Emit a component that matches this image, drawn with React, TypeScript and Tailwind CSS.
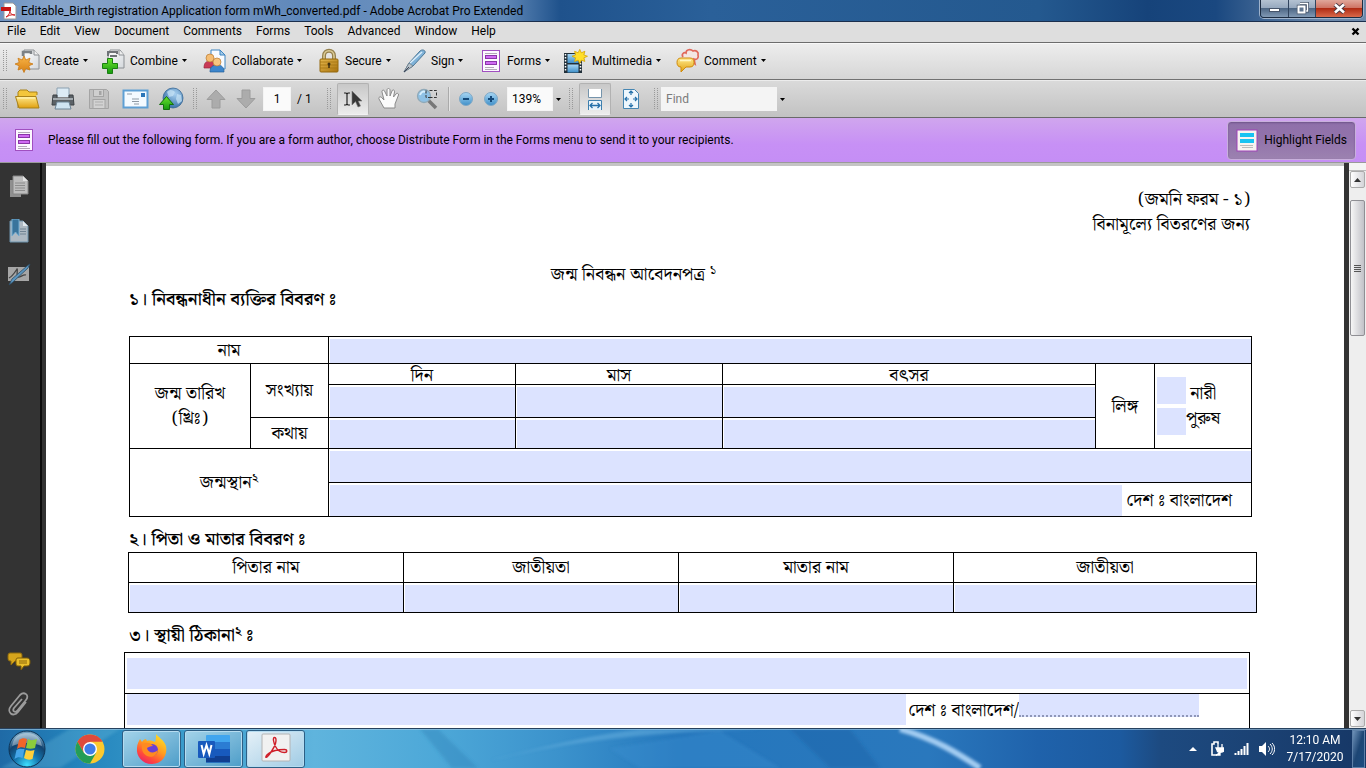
import type { InputHTMLAttributes, ReactNode } from 'react';
import clsx from 'clsx';

const menus = ['File', 'Edit', 'View', 'Document', 'Comments', 'Forms', 'Tools', 'Advanced', 'Window', 'Help'];

function Defs() {
  return (
    <svg width="0" height="0" className="absolute" aria-hidden="true">
      <defs>
        <linearGradient id="gold" x1="0" y1="0" x2="0" y2="1">
          <stop offset="0" stopColor="#ffe98a" />
          <stop offset="1" stopColor="#e0a010" />
        </linearGradient>
        <linearGradient id="brass" x1="0" y1="0" x2="1" y2="1">
          <stop offset="0" stopColor="#e6b84e" />
          <stop offset="1" stopColor="#a8730f" />
        </linearGradient>
        <linearGradient id="orange" x1="0" y1="0" x2="0" y2="1">
          <stop offset="0" stopColor="#f9b64a" />
          <stop offset="1" stopColor="#d77f12" />
        </linearGradient>
        <linearGradient id="green" x1="0" y1="0" x2="0" y2="1">
          <stop offset="0" stopColor="#6be32c" />
          <stop offset="1" stopColor="#169a10" />
        </linearGradient>
        <linearGradient id="paper" x1="0" y1="0" x2="1" y2="1">
          <stop offset="0" stopColor="#ffffff" />
          <stop offset="1" stopColor="#d4d8dc" />
        </linearGradient>
        <linearGradient id="sky" x1="0" y1="0" x2="0" y2="1">
          <stop offset="0" stopColor="#a9d8f5" />
          <stop offset="1" stopColor="#3f8fc8" />
        </linearGradient>
        <radialGradient id="globe" cx="0.6" cy="0.3" r="0.8">
          <stop offset="0" stopColor="#a8d0f0" />
          <stop offset="1" stopColor="#2a659f" />
        </radialGradient>
        <radialGradient id="orb" cx="0.5" cy="0.95" r="0.85">
          <stop offset="0" stopColor="#3fe0ff" />
          <stop offset="0.4" stopColor="#1577b0" />
          <stop offset="0.75" stopColor="#12436f" />
          <stop offset="1" stopColor="#6f9dbd" />
        </radialGradient>
        <linearGradient id="fox" x1="0.8" y1="0" x2="0.2" y2="1">
          <stop offset="0" stopColor="#ffe226" />
          <stop offset="0.45" stopColor="#ff9a1f" />
          <stop offset="0.75" stopColor="#ff4a3c" />
          <stop offset="1" stopColor="#e81e6c" />
        </linearGradient>
      </defs>
    </svg>
  );
}

function Icon({ w = 26, h = 26, children }: { w?: number; h?: number; children: ReactNode }) {
  return (
    <svg width={w} height={h} viewBox={`0 0 ${w} ${h}`} className="shrink-0" aria-hidden="true">
      {children}
    </svg>
  );
}

const star = 'M9 8l1.800 4 4.200-1.800-1.200 4.300 4.200 1.500-4.200 1.800 1.200 4.200-4.200-1.500-1.800 4-1.800-4-4.200 1.500 1.200-4.200L0 16l4.200-1.500L3 10.200 7.200 12z';

const CreateIcon = () => (
  <Icon>
    <path d="M9 2h10l5 5v14H9z" fill="url(#paper)" stroke="#8c9094" />
    <path d="M19 2v5h5" fill="#eee" stroke="#8c9094" />
    <path d="M8 8V4h8v2" fill="none" stroke="#7d8286" strokeWidth="2.500" />
    <path d={star} fill="url(#orange)" stroke="#c97a18" strokeWidth=".8" />
  </Icon>
);

const CombineIcon = () => (
  <Icon>
    <path d="M9 2h10l4 5v13H7V9z" fill="url(#paper)" stroke="#8c9094" />
    <path d="M18 2v5h5" fill="#eee" stroke="#8c9094" />
    <path d="M7 8V4h9v2M9 8h7" fill="none" stroke="#6f7377" strokeWidth="2" />
    <path d="M6.500 10.500h5v5h5v5h-5v5h-5v-5h-5v-5h5z" fill="url(#green)" stroke="#1a7f12" />
  </Icon>
);

const CollaborateIcon = () => (
  <Icon>
    <path d="M8 2h9l5 5v14H8z" fill="#f8fbff" stroke="#3c84c0" />
    <path d="M17 2v5h5z" fill="#a7cdea" stroke="#3c84c0" />
    <path d="M1 20c0-5 2-7 6-7s6 2 6 7z" fill="#c93a55" stroke="#96263e" strokeWidth=".7" />
    <circle cx="7" cy="10" r="4" fill="#f5bd73" stroke="#b97a32" strokeWidth=".7" />
    <path d="M7 24c0-5 2.500-7 7-7s7 2 7 7z" fill="#3d86cc" stroke="#245f99" strokeWidth=".7" />
    <circle cx="14" cy="14" r="4" fill="#f7c57f" stroke="#b97a32" strokeWidth=".7" />
  </Icon>
);

const SecureIcon = () => (
  <Icon w={22}>
    <path d="M6 12V8c0-7 10-7 10 0v4" fill="none" stroke="#94804e" strokeWidth="4" />
    <path d="M6 12V8c0-7 10-7 10 0v4" fill="none" stroke="#dccb96" strokeWidth="1.500" />
    <rect x="2" y="11" width="18" height="13" rx="1" fill="url(#brass)" stroke="#94680f" />
    <path d="M2 14h18M2 17h18M2 20h18" stroke="#a5750f" strokeWidth=".8" />
    <circle cx="11" cy="16" r="1.500" fill="#403010" />
    <path d="M11 16v4" stroke="#403010" strokeWidth="1.500" />
  </Icon>
);

const SignIcon = () => (
  <Icon>
    <path d="M2 24l5-9L18 3c2-2 6-1 5 2L11 18z" fill="#7fb2d8" stroke="#4c7796" />
    <path d="M8 15L20 4" stroke="#dceefa" strokeWidth="1.500" />
    <path d="M2 24l5-9 4 3z" fill="#b9c3ca" stroke="#6a7780" strokeWidth=".7" />
    <path d="M2 24l5-5" stroke="#445" />
  </Icon>
);

const FormsIcon = () => (
  <Icon w={20} h={24}>
    <rect x="1.500" y="1.500" width="17" height="21" fill="#fcf8ff" stroke="#a04fc0" />
    <path d="M4 4.500h12M4 12.500h12M4 18.500h9M4 20.500h12" stroke="#b3a8b8" />
    <rect x="4.500" y="6.500" width="11" height="3" fill="#cf6af2" stroke="#8a35a8" />
    <rect x="4.500" y="12.500" width="11" height="3" fill="#cf6af2" stroke="#8a35a8" />
  </Icon>
);

const MultimediaIcon = () => (
  <Icon>
    <rect x="1" y="5" width="18" height="20" fill="#22303a" />
    <path d="M2.500 6v18M17.500 6v18" stroke="#fff" strokeWidth="1.500" strokeDasharray="1.500 1.500" />
    <rect x="4.500" y="6" width="11" height="9" fill="url(#sky)" />
    <rect x="4.500" y="16.500" width="11" height="8" fill="url(#sky)" />
    <path d={star} transform="translate(9 -5.500) scale(.86)" fill="#ffdf2a" stroke="#d9a808" />
  </Icon>
);

const CommentIcon = () => (
  <Icon>
    <path d="M8 9C6 6 9 4 11 5c0-4 5-4 7-2 3-1 6 1 5 4 1 3-1 5-4 4l1 5-5-4" fill="#f3e6e3" stroke="#e0685a" strokeWidth="1.700" />
    <path d="M6 10h9c3 0 4 2 4 4.500S18 19 15 19h-4l-5 5v-5c-3 0-4-2-4-4.500S3 10 6 10z" fill="url(#gold)" stroke="#d08a0a" />
    <path d="M5 12.500h11" stroke="#fff7c4" strokeWidth="1.500" />
  </Icon>
);

const FolderIcon = () => (
  <Icon w={27} h={22}>
    <path d="M4 20V4l2-2h7l2 2h8v3" fill="#f3c63b" stroke="#a9821a" />
    <path d="M5 20L1.500 8.500H22L25 20z" fill="url(#gold)" stroke="#a9821a" />
    <path d="M3 10h18" stroke="#fff6c0" />
  </Icon>
);

const PrintIcon = () => (
  <Icon w={24} h={24}>
    <path d="M6 10V1h12v9" fill="#dcebf5" stroke="#8ba0b0" />
    <path d="M2 8h4v3h12V8h4l1 10H1z" fill="#5c6267" stroke="#3c4145" />
    <path d="M2 12h20" stroke="#a4abb0" strokeWidth="2" />
    <path d="M6 15h12l2 7H4z" fill="#cfe4f2" stroke="#6d8496" />
  </Icon>
);

const SaveIcon = () => (
  <Icon w={22} h={22}>
    <path d="M1.500 1.500h17l2 2v17h-19z" fill="#c0c0c0" stroke="#a4a4a4" />
    <rect x="5.500" y="1.500" width="10" height="7" fill="#cfcfcf" stroke="#a4a4a4" />
    <rect x="11" y="3" width="2.500" height="4" fill="#a4a4a4" />
    <rect x="5" y="11.500" width="12" height="9" fill="#d2d2d2" stroke="#a4a4a4" />
    <path d="M7 14h8M7 17h8" stroke="#adadad" />
  </Icon>
);

const MailIcon = () => (
  <Icon w={27} h={20}>
    <rect x="1.500" y="1.500" width="24" height="17" fill="#f4faff" stroke="#5e9fd4" strokeWidth="2" />
    <rect x="19" y="4" width="4" height="4" fill="#2c76b8" />
    <path d="M5 5h5M10 10h7M10 12.500h7M12 15h5" stroke="#8f9aa5" />
  </Icon>
);

const UploadIcon = () => (
  <Icon w={26} h={24}>
    <circle cx="15" cy="11" r="10" fill="url(#globe)" stroke="#285c8c" strokeWidth=".7" />
    <path d="M9 5c3-3 6-2 8 0l-2 4-4 1zM19 7l4 1 1 6-4 3-2-5z" fill="#cbe5f7" opacity=".7" />
    <path d="M8.500 9.500l7 8h-4v5h-6v-5h-4z" fill="url(#green)" stroke="#146f0e" />
  </Icon>
);

const PageArrowIcon = ({ down }: { down?: boolean }) => (
  <Icon w={20} h={20}>
    <path
      d="M10 1l9 9.500h-5V19H6v-8.500H1z"
      transform={down ? 'rotate(180 10 10)' : undefined}
      fill="#acacac"
      stroke="#9c9c9c"
    />
  </Icon>
);

const SelectIcon = () => (
  <Icon w={20} h={18}>
    <path d="M1 3h2l1 1 1-1h2M4 4v10M1 15h2l1-1 1 1h2" fill="none" stroke="#222" strokeWidth="1.200" />
    <path d="M9 1v14l3.500-3.500L15 17l2.500-1-2.300-5H19z" fill="#383838" stroke="#777" strokeWidth=".6" />
  </Icon>
);

const HandIcon = () => (
  <Icon w={22} h={22}>
    <path
      d="M6 20L1 11c-1-2 2-3 3-1l2 2L4 4c-.5-2 2-2.500 2.500-1L9 8V2c0-2 3-2 3 0v6l2-5c.6-2 3-1 2.500 1L15.500 9l2.500-3c1-1.500 3-.5 2.500 1L17 16v4z"
      fill="#fbfbfb"
      stroke="#8a8a8a"
    />
  </Icon>
);

const MarqueeZoomIcon = () => (
  <Icon w={22} h={22}>
    <path d="M12 12l8 8" stroke="#777" strokeWidth="3.500" />
    <path d="M9 2.500h11.500v7H14" fill="none" stroke="#333" strokeDasharray="3 1.500" />
    <circle cx="8" cy="8" r="6.500" fill="#8ec1e6" stroke="#8fa9b8" strokeWidth="1.300" />
    <path d="M10 2.500v7h6" fill="none" stroke="#333" strokeDasharray="3 1.500" />
    <path d="M4 7c1-3 3-4 5-3" fill="none" stroke="#d8effd" strokeWidth="2" />
  </Icon>
);

const RoundIcon = ({ plus }: { plus?: boolean }) => (
  <Icon w={16} h={16}>
    <circle cx="8" cy="8" r="6.500" fill="url(#sky)" stroke="#7fa8c6" />
    <path d={plus ? 'M5 8h6M8 5v6' : 'M5 8h6'} stroke="#154a7a" strokeWidth="2" />
  </Icon>
);

const FitWidthIcon = () => (
  <Icon w={18} h={22}>
    <path d="M2.500 1v8.500h13V1" fill="#fff" stroke="#7594ac" />
    <path d="M2.500 22v-9.500h13V22" fill="#e8f3fb" stroke="#3d7fae" />
    <path d="M4 17.500h10M6.500 15L4 17.500 6.500 20M11.500 15l2.500 2.500-2.500 2.500" fill="none" stroke="#2470aa" strokeWidth="1.300" />
  </Icon>
);

const FitPageIcon = () => (
  <Icon w={18} h={22}>
    <path d="M1.500 1.500h11l4 4v15h-15z" fill="#eef7fd" stroke="#4686b2" />
    <path
      d="M9 3v4M7 5l2-2 2 2M9 19v-4M7 17l2 2 2-2M3 11h4M5 9l-2 2 2 2M15 11h-4M13 9l2 2-2 2"
      fill="none"
      stroke="#2470aa"
      strokeWidth="1.200"
    />
  </Icon>
);

const toolbarItems = [
  { label: 'Create', icon: <CreateIcon />, width: 'w-[86px]' },
  { label: 'Combine', icon: <CombineIcon />, width: 'w-[102px]' },
  { label: 'Collaborate', icon: <CollaborateIcon />, width: 'w-[113px]' },
  { label: 'Secure', icon: <SecureIcon />, width: 'w-[86px]' },
  { label: 'Sign', icon: <SignIcon />, width: 'w-[76px]' },
  { label: 'Forms', icon: <FormsIcon />, width: 'w-[85px]' },
  { label: 'Multimedia', icon: <MultimediaIcon />, width: 'w-[112px]' },
  { label: 'Comment', icon: <CommentIcon />, width: 'w-[100px]' },
];

function Caret() {
  return (
    <svg width="5" height="3" viewBox="0 0 5 3" className="shrink-0" aria-hidden="true">
      <path d="M0 0h5L2.500 3z" fill="#000" />
    </svg>
  );
}

function Grip({ className }: { className?: string }) {
  return (
    <svg width="4" height="22" viewBox="0 0 4 22" className={clsx('shrink-0', className)} aria-hidden="true">
      <path d="M.5 0v22M3.500 0v22" stroke="#999" strokeDasharray="1 1" />
    </svg>
  );
}

function ToolButton({ label, className, children }: { label: string; className: string; children: ReactNode }) {
  return (
    <button aria-label={label} className={clsx('flex h-8 shrink-0 items-center justify-center', className)}>
      {children}
    </button>
  );
}

function TitleBar() {
  return (
    <header className="relative flex h-[22px] shrink-0 items-start justify-between border-b border-[#1b2f4d] bg-[linear-gradient(90deg,#6f93c2_0,#86a4ca_4%,#7896c2_14%,#5f88ba_22%,#6a90be_30%,#5f87b6_37%,#1f528c_41%,#2a6099_52%,#24598f_76%,#16437a_84%,#1a4880_89%,#6c89ab_97%)]">
      <div className="flex h-[21px] items-center gap-1 pl-px">
        <Icon w={16} h={18}>
          <path d="M3 1h9l3 3v13H3z" fill="#fff" stroke="#999" />
          <path d="M0 5h10v4H0z" fill="#c81414" />
          <path d="M5 15c3-1 4-5 4-7 0 4 2 5 5 5-4-1-7 1-9 2z" fill="none" stroke="#d02020" />
        </Icon>
        <h1 className="leading-4">
          Editable_Birth registration Application form mWh_converted.pdf - Adobe Acrobat Pro Extended
        </h1>
      </div>
      <div className="mr-[3px] flex h-[18px] overflow-hidden rounded-b-[4px] border border-t-0 border-[#1c2c42] shadow-[0_0_0_1px_#9fb3cc]">
        <button aria-label="Minimize" className="flex w-[28px] items-end justify-center border-r border-[#31445e] bg-[linear-gradient(#b4c2d2_0,#97a9bf_45%,#4e6785_50%,#8199b4_100%)] pb-[5px]">
          <span className="h-1 w-[11px] border border-[#46546a] bg-white" />
        </button>
        <button aria-label="Restore" className="flex w-[27px] items-center justify-center border-r border-[#31445e] bg-[linear-gradient(#b4c2d2_0,#97a9bf_45%,#4e6785_50%,#8199b4_100%)]">
          <Icon w={13} h={13}>
            <path d="M4 1.500h7.500V9H10" fill="none" stroke="#46546a" strokeWidth="3" />
            <path d="M4 1.500h7.500V9H10" fill="none" stroke="#fff" strokeWidth="1.400" />
            <path d="M2.500 4.500h6v6h-6z" fill="#60758f" stroke="#46546a" strokeWidth="3.400" />
            <path d="M2.500 4.500h6v6h-6z" fill="#60758f" stroke="#fff" strokeWidth="2" />
          </Icon>
        </button>
        <button aria-label="Close" className="flex w-[46px] items-center justify-center bg-[linear-gradient(#e0a79a_0,#cf7565_45%,#b02c14_50%,#d9694a_100%)]">
          <Icon w={13} h={11}>
            <path d="M2 1.500l9 8M11 1.500l-9 8" stroke="#4a3a44" strokeWidth="4.500" />
            <path d="M2 1.500l9 8M11 1.500l-9 8" stroke="#fff" strokeWidth="2.600" />
          </Icon>
        </button>
      </div>
    </header>
  );
}

function MenuBar() {
  return (
    <nav className="flex h-[21px] shrink-0 items-center justify-between border-b border-[#6c6c6c] bg-[#dedede] pr-[6px] pb-[2px] pl-[7px]">
      <div className="flex gap-[14px]">
        {menus.map((menu) => (
          <button key={menu} className="leading-4">
            {menu}
          </button>
        ))}
      </div>
      <button aria-label="Close document">
        <Icon w={9} h={9}>
          <path d="M1.500 1.500l6 6M7.500 1.500l-6 6" stroke="#000" strokeWidth="2.400" />
        </Icon>
      </button>
    </nav>
  );
}

function TaskToolbar() {
  return (
    <div className="flex h-[37px] shrink-0 items-center border-t border-b border-t-[#f8f8f8] border-b-[#727272] bg-linear-to-b from-[#ededed] to-[#d6d6d6] pb-[2px] pl-[3px]">
      <Grip className="mr-2" />
      {toolbarItems.map((item) => (
        <button key={item.label} className={clsx('flex h-8 shrink-0 items-center gap-1', item.width)}>
          <span className="flex w-[25px] justify-center">{item.icon}</span>
          {item.label}
          <Caret />
        </button>
      ))}
    </div>
  );
}

function FileToolbar() {
  return (
    <div className="flex h-[38px] shrink-0 items-center border-t border-b border-t-[#ececec] border-b-[#6a6a6a] bg-linear-to-b from-[#dadada] to-[#c2c2c2] pl-[3px]">
      <Grip className="mr-[2px]" />
      <ToolButton label="Open" className="w-9"><FolderIcon /></ToolButton>
      <ToolButton label="Print" className="w-9"><PrintIcon /></ToolButton>
      <ToolButton label="Save" className="w-9"><SaveIcon /></ToolButton>
      <ToolButton label="Email" className="w-9"><MailIcon /></ToolButton>
      <ToolButton label="Upload" className="w-9"><UploadIcon /></ToolButton>
      <Grip className="mx-1" />
      <ToolButton label="Previous page" className="w-[30px]"><PageArrowIcon /></ToolButton>
      <ToolButton label="Next page" className="w-[30px]"><PageArrowIcon down /></ToolButton>
      <input
        aria-label="Page number"
        defaultValue="1"
        className="ml-[2px] h-6 w-7 border border-[#f4f4f4] bg-[#fafafa] text-center outline-none"
      />
      <span className="w-9 shrink-0 pl-[6px] whitespace-pre">/ 1</span>
      <Grip className="mr-[6px]" />
      <ToolButton label="Select tool" className="w-8 rounded-[2px] border border-[#b2b2b2] border-b-[#f2f2f2] bg-linear-to-b from-[#c8c8c8] to-[#ececec]">
        <SelectIcon />
      </ToolButton>
      <ToolButton label="Hand tool" className="w-10"><HandIcon /></ToolButton>
      <ToolButton label="Marquee zoom" className="w-9"><MarqueeZoomIcon /></ToolButton>
      <span className="mx-[3px] h-6 w-[2px] border-l border-[#aaa] bg-[#e4e4e4]" />
      <ToolButton label="Zoom out" className="w-[26px]"><RoundIcon /></ToolButton>
      <ToolButton label="Zoom in" className="w-6"><RoundIcon plus /></ToolButton>
      <input
        aria-label="Zoom"
        defaultValue="139%"
        className="ml-1 h-6 w-[46px] border border-[#f4f4f4] bg-[#fafafa] pl-1 outline-none"
      />
      <ToolButton label="Zoom presets" className="w-[10px]"><Caret /></ToolButton>
      <Grip className="mx-[6px]" />
      <ToolButton label="Scrolling pages" className="w-8 rounded-[2px] border border-[#b2b2b2] border-b-[#f2f2f2] bg-linear-to-b from-[#c8c8c8] to-[#ececec]">
        <FitWidthIcon />
      </ToolButton>
      <ToolButton label="One full page" className="w-10"><FitPageIcon /></ToolButton>
      <Grip className="mx-[3px]" />
      <input
        aria-label="Find"
        placeholder="Find"
        className="h-6 w-[116px] border border-[#f4f4f4] bg-[#f4f4f4] pl-1 outline-none placeholder:text-[#7b7b7b]"
      />
      <ToolButton label="Find options" className="w-[10px]"><Caret /></ToolButton>
    </div>
  );
}

function MessageBar() {
  return (
    <div className="flex h-[44px] shrink-0 items-center justify-between bg-[linear-gradient(#d0a6ee_0,#c790f5_60%,#c58ef5_100%)] pr-[10px] pl-[14px]">
      <div className="flex items-center gap-[14px]">
        <FormsIcon />
        <p>
          Please fill out the following form. If you are a form author, choose Distribute Form in the Forms menu to send it to your recipients.
        </p>
      </div>
      <button className="flex h-[39px] items-center gap-[6px] rounded-[4px] border border-[#c8b0dc] bg-[linear-gradient(#8f70aa,#9273ab_50%,#9c82b0)] px-2 shadow-[inset_0_1px_2px_#6f5488]">
        <Icon w={22} h={23}>
          <rect x="1" y="1" width="20" height="21" fill="#f6f3f0" stroke="#a042b8" />
          <rect x="4" y="4" width="14" height="4" fill="#18c3f2" />
          <rect x="4" y="10" width="14" height="4" fill="#18c3f2" />
          <path d="M4 16.500h13M6 18.500h11" stroke="#bbb" />
        </Icon>
        Highlight Fields
      </button>
    </div>
  );
}

function SidePanel() {
  return (
    <aside className="flex w-[42px] shrink-0 flex-col justify-between border-r-2 border-[#0c0c0c] bg-[#333] pt-3 pr-[2px] pb-[10px]">
      <div className="flex flex-col items-center gap-5">
        <button aria-label="Pages">
          <Icon w={20} h={24}>
            <path d="M1 5h11v17H1z" fill="#8f8f8f" />
            <path d="M4 1h10l5 5v13H4z" fill="#bdbdbd" stroke="#858585" />
            <path d="M14 1v5h5z" fill="#e2e2e2" />
            <path d="M6 8h10M6 10.500h10M6 13h10M6 15.500h10" stroke="#8c8c8c" />
          </Icon>
        </button>
        <button aria-label="Bookmarks">
          <Icon w={20} h={24}>
            <path d="M1 2h13l5 5v16H1z" fill="#aeb9c2" stroke="#6d93ad" />
            <path d="M14 2v5h5z" fill="#e2e8ec" />
            <path d="M11 10h6M11 12.500h6M11 15h6" stroke="#718493" />
            <path d="M3 0h7v17l-3.500-4L3 17z" fill="#39749c" stroke="#75acd0" />
          </Icon>
        </button>
        <button aria-label="Signatures">
          <Icon w={26} h={24}>
            <path d="M2 4h21v14H2z" fill="#a6a6a6" />
            <path d="M3 15c4-2 6-6 8-9 1 0-1 7 1 8s5-3 8-2" fill="none" stroke="#444" strokeWidth="1.300" />
            <path d="M3 22l3-6L21 3l3-2-2 4L7 19z" fill="#5b95bf" stroke="#2c4d66" strokeWidth=".8" />
          </Icon>
        </button>
      </div>
      <div className="flex flex-col items-center gap-5">
        <button aria-label="Comments">
          <Icon w={24} h={20}>
            <path d="M3 1h10c2 0 2 1 2 4s0 4-2 4H8l-4 4V9H3C1 9 1 7 1 5s0-4 2-4z" fill="#d6a51c" stroke="#8e6a0c" />
            <path d="M11 6h9c2 0 3 1 3 4s-1 4-3 4h-3l-3 4v-4h-3c-2 0-2-1-2-4s0-4 2-4z" fill="#eabf2c" stroke="#7d5c08" />
            <path d="M12 9h8M12 11h8" stroke="#8a6508" />
          </Icon>
        </button>
        <button aria-label="Attachments">
          <Icon w={22} h={26}>
            <path
              d="M14 7L6 16c-2 3 1 5 3 3l9-11c4-5-2-9-6-5L3 14c-5 6 2 12 7 6l8-10"
              fill="none"
              stroke="#9b9b9b"
              strokeWidth="1.800"
            />
          </Icon>
        </button>
      </div>
    </aside>
  );
}

function Field({ className, ...props }: InputHTMLAttributes<HTMLInputElement>) {
  return <input {...props} className={clsx('block bg-[#dce3ff] px-1 outline-none', className)} />;
}

const cell = 'border border-black p-0 text-center font-normal';
const headCell = 'border border-black p-0 pt-1 text-center font-normal leading-4';
const fieldCell = 'border border-black p-0 pt-[2px] pl-px';

// the visarga needs a no-break space as its base, else a dotted circle is drawn
function BirthForm() {
  return (
    <main className="min-w-0 flex-1 overflow-hidden border-t-3 border-[#c4c4c4] bg-white pt-[21px] pr-[92px] pl-[83px] font-['Noto_Serif_Bengali','Noto_Sans_Bengali','Liberation_Serif',serif] text-[18px] leading-[25px]">
      <div className="pr-[2px] text-right">
        <p>(জমনি ফরম - ১)</p>
        <p>বিনামূল্যে বিতরণের জন্য</p>
      </div>
      <h2 className="mt-[25px] pr-[114px] text-center">
        জন্ম নিবন্ধন আবেদনপত্র <sup className="text-[13px] leading-none">১</sup>
      </h2>
      <h3 className="mb-6 font-semibold">১। নিবন্ধনাধীন ব্যক্তির বিবরণ&nbsp;ঃ</h3>

      <table className="w-full table-fixed border-collapse">
        <colgroup>
          <col className="w-[121px]" />
          <col className="w-[78px]" />
          <col className="w-[187px]" />
          <col className="w-[207px]" />
          <col />
          <col className="w-[59px]" />
          <col className="w-[97px]" />
        </colgroup>
        <tbody>
          <tr className="h-[27px]">
            <th colSpan={2} className={cell}>নাম</th>
            <td colSpan={5} className={fieldCell}><Field aria-label="নাম" className="h-6 w-full" /></td>
          </tr>
          <tr className="h-[21px]">
            <th rowSpan={3} className={cell}>
              জন্ম তারিখ
              <br />
              (খ্রিঃ)
            </th>
            <th rowSpan={2} className={cell}>সংখ্যায়</th>
            <th className={headCell}>দিন</th>
            <th className={headCell}>মাস</th>
            <th className={headCell}>বৎসর</th>
            <th rowSpan={3} className={cell}>লিঙ্গ</th>
            <td rowSpan={3} className="border border-black p-0 pl-[2px]">
              <div className="flex items-center">
                <div className="flex flex-col gap-1">
                  <Field id="female" className="h-[27px] w-[29px]" />
                  <Field id="male" className="h-[27px] w-[29px]" />
                </div>
                <div className="flex flex-col items-center">
                  <label htmlFor="female">নারী</label>
                  <label htmlFor="male">পুরুষ</label>
                </div>
              </div>
            </td>
          </tr>
          <tr className="h-[33px]">
            <td className={fieldCell}><Field aria-label="দিন (সংখ্যায়)" className="h-[30px] w-full" /></td>
            <td className={fieldCell}><Field aria-label="মাস (সংখ্যায়)" className="h-[30px] w-full" /></td>
            <td className={fieldCell}><Field aria-label="বৎসর (সংখ্যায়)" className="h-[30px] w-full" /></td>
          </tr>
          <tr className="h-[31px]">
            <th className={cell}>কথায়</th>
            <td className={fieldCell}><Field aria-label="দিন (কথায়)" className="h-7 w-full" /></td>
            <td className={fieldCell}><Field aria-label="মাস (কথায়)" className="h-7 w-full" /></td>
            <td className={fieldCell}><Field aria-label="বৎসর (কথায়)" className="h-7 w-full" /></td>
          </tr>
          <tr className="h-[34px]">
            <th rowSpan={2} colSpan={2} className={cell}>
              জন্মস্থান<sup className="text-[13px] leading-none">২</sup>
            </th>
            <td colSpan={5} className={fieldCell}><Field aria-label="জন্মস্থান" className="h-[31px] w-full" /></td>
          </tr>
          <tr className="h-[34px]">
            <td colSpan={5} className={fieldCell}>
              <div className="flex items-center pr-[19px]">
                <Field aria-label="জন্মস্থান, দ্বিতীয় লাইন" className="mr-1 h-[31px] min-w-0 flex-1" />
                <span>দেশ&nbsp;ঃ বাংলাদেশ</span>
              </div>
            </td>
          </tr>
        </tbody>
      </table>

      <h3 className="mt-[10px] font-semibold">২। পিতা ও মাতার বিবরণ&nbsp;ঃ</h3>
      <div className="-mr-[5px] -ml-px">
        <table className="w-full table-fixed border-collapse">
          <colgroup>
            <col className="w-[275px]" />
            <col className="w-[275px]" />
            <col className="w-[275px]" />
            <col />
          </colgroup>
          <thead>
            <tr className="h-[30px]">
              <th className={cell}>পিতার নাম</th>
              <th className={cell}>জাতীয়তা</th>
              <th className={cell}>মাতার নাম</th>
              <th className={cell}>জাতীয়তা</th>
            </tr>
          </thead>
          <tbody>
            <tr className="h-[30px]">
              <td className={fieldCell}><Field aria-label="পিতার নাম" className="h-[27px] w-full" /></td>
              <td className={fieldCell}><Field aria-label="পিতার জাতীয়তা" className="h-[27px] w-full" /></td>
              <td className={fieldCell}><Field aria-label="মাতার নাম" className="h-[27px] w-full" /></td>
              <td className={fieldCell}><Field aria-label="মাতার জাতীয়তা" className="h-[27px] w-full" /></td>
            </tr>
          </tbody>
        </table>
      </div>

      <h3 className="mt-[10px] font-semibold">
        ৩। স্থায়ী ঠিকানা<sup className="text-[13px] leading-none">২</sup>&nbsp;ঃ
      </h3>
      <div className="mt-1 mr-[2px] -ml-[5px] border border-black">
        <div className="border-b border-black px-[2px] pt-[5px] pb-1">
          <Field aria-label="স্থায়ী ঠিকানা" className="h-[31px] w-full" />
        </div>
        <div className="flex items-start pr-[50px] pb-6 pl-[2px]">
          <Field aria-label="স্থায়ী ঠিকানা, দ্বিতীয় লাইন" className="mr-[2px] h-[31px] min-w-0 flex-1" />
          <label htmlFor="country" className="pt-1">দেশ&nbsp;ঃ বাংলাদেশ/</label>
          <Field id="country" className="h-[23px] w-[180px] border-b-2 border-dotted border-[#8f97b8]" />
        </div>
      </div>
    </main>
  );
}

function ScrollBar() {
  const arrow = 'flex h-[17px] w-[15px] items-center justify-center rounded-[2px] border border-[#aaa] bg-linear-to-r from-white to-[#d4d4d8]';
  return (
    <div className="flex w-[17px] shrink-0 flex-col items-center justify-between bg-[#eee] pb-px">
      <div className="flex w-full flex-col items-center">
        <div className="h-2 w-full border-b border-[#bbb] bg-[#f4f4f4]" />
        <button aria-label="Scroll up" className={arrow}>
          <Icon w={7} h={4}><path d="M0 4l3.500-4L7 4z" fill="#333" /></Icon>
        </button>
        <div className="mt-3 flex h-[136px] w-[15px] flex-col items-center justify-center gap-px rounded-[2px] border border-[#8f8f94] bg-linear-to-r from-[#f6f6f6] to-[#c2c2c8]">
          <span className="h-px w-[7px] bg-[#555]" />
          <span className="h-px w-[7px] bg-[#555]" />
          <span className="h-px w-[7px] bg-[#555]" />
          <span className="h-px w-[7px] bg-[#555]" />
        </div>
      </div>
      <button aria-label="Scroll down" className={arrow}>
        <Icon w={7} h={4}><path d="M0 0h7L3.500 4z" fill="#333" /></Icon>
      </button>
    </div>
  );
}

function TaskButton({ label, active, children }: { label: string; active?: boolean; children: ReactNode }) {
  return (
    <button
      aria-label={label}
      className={clsx(
        'flex h-[38px] w-[59px] items-center justify-center rounded-[3px] border border-[#2d5f85] shadow-[inset_0_0_0_1px_#b6dcf0]',
        active ? 'bg-linear-to-br from-[#e6f1f8] to-[#9fcbe4]' : 'bg-linear-to-br from-[#a4d4ea] to-[#4c9dc8]',
      )}
    >
      {children}
    </button>
  );
}

function TaskBar() {
  return (
    <footer className="relative flex h-10 shrink-0 items-center justify-between overflow-hidden border-t border-[#27425f] bg-[linear-gradient(90deg,#1f6aa6_0,#2485bd_6%,#3c9dcc_14%,#5fb4dd_23%,#4da8d8_32%,#3b92cc_41%,#2577bd_50%,#2a78bd_68%,#1f62ab_76%,#1c5a9f_82%,#1d4a80_85%,#1b4274_92%,#163766_100%)]">
      <svg className="absolute inset-0 h-full w-full" viewBox="0 0 1366 40" preserveAspectRatio="none" aria-hidden="true">
        <defs>
          <filter id="soft" x="-20%" y="-50%" width="140%" height="200%">
            <feGaussianBlur stdDeviation="1.500" />
          </filter>
        </defs>
        <g filter="url(#soft)">
          <path d="M500 30C560 15 640 3 760 0H640C580 8 540 20 490 32z" fill="#6cb4e2" opacity=".5" />
          <path d="M420 0h18l40 40h-26z" fill="#2f82b8" opacity=".4" />
          <path d="M640 40l-30-20 110-18 60 38z" fill="#3f8ed2" opacity=".35" />
          <path d="M790 0h60l30 40h-50z" fill="#1c68ab" opacity=".6" />
          <path d="M900 0c35 10 58 25 80 40" fill="none" stroke="#a4cdf2" strokeWidth="6" />
          <path d="M0 40C40 20 60 5 70 0h50L60 40z" fill="#7cc8e4" opacity=".25" />
        </g>
        <path d="M0 .5h1366" stroke="#a7cbe4" opacity=".6" />
      </svg>

      <div className="relative flex items-center gap-[3px] pl-2">
        <button aria-label="Start">
          <Icon w={38} h={38}>
            <circle cx="19" cy="19" r="18" fill="url(#orb)" stroke="#0d3355" />
            <path d="M4 16C6 5 13 3 19 3s13 2 15 13c-10-4-20-4-30 0z" fill="#fff" opacity=".35" />
            <path d="M11 10c3-2 5-2 8-1l-2 9c-3-1-5-1-8 1z" fill="#f0652a" />
            <path d="M20 9c3 2 6 1 9 0l-2 9c-3 1-6 1-9 0z" fill="#8ccc3c" />
            <path d="M8.500 20c3-2 5-1 8-1l-2 9c-3-1-5-1-8 1z" fill="#45a5e8" />
            <path d="M18 20c3 1 6 1 8.500 0l-2 9c-3 1-5 1-8.500-1z" fill="#ffd03a" />
          </Icon>
        </button>
        <button aria-label="Chrome" className="ml-[11px] flex w-[59px] items-center justify-center">
          <Icon w={30} h={30}>
            <circle cx="15" cy="15" r="14.500" fill="#fbc92e" />
            <path d="M2.440 7.750A14.500 14.500 0 0 1 27.560 7.750H15L8.700 18.600z" fill="#df4a3c" />
            <path d="M2.440 7.750A14.500 14.500 0 0 0 15 29.500L21.300 18.600 15 22 8.700 18.600z" fill="#249d57" />
            <circle cx="15" cy="15" r="7" fill="#fff" />
            <circle cx="15" cy="15" r="5.600" fill="#3f7de8" />
          </Icon>
        </button>
        <TaskButton label="Firefox">
          <Icon w={32} h={32}>
            <path d="M20 1c2 3 8 6 10 12 2 9-4 18-14 18S0 23 1 15c0-4 2-7 3-9l2 3c1-2 3-3 4-3l1 2c3-1 6 0 8 1 1-2 1-5 1-8z" fill="url(#fox)" />
            <circle cx="16" cy="17" r="6" fill="#6a3fd4" />
            <path d="M6 11l3-1c3-1 6 0 8 3-3 0-4 1-6 2 1 5 7 6 11 2-1 6-6 8-11 6-4-2-6-7-5-12z" fill="#ff8a20" />
          </Icon>
        </TaskButton>
        <TaskButton label="Word">
          <Icon w={32} h={30}>
            <rect x="8" y="1" width="24" height="28" rx="1" fill="#41a5ee" />
            <path d="M8 8h24v7H8z" fill="#2b7cd3" />
            <path d="M8 15h24v7H8z" fill="#185abd" />
            <path d="M8 22h24v6.500H8z" fill="#103f91" />
            <rect x="0" y="7" width="17" height="17" rx="1" fill="#185abd" />
            <path d="M3.500 11l2.200 9 2.800-9 2.800 9 2.200-9" fill="none" stroke="#fff" strokeWidth="2" />
          </Icon>
        </TaskButton>
        <TaskButton label="Adobe Acrobat" active>
          <Icon w={30} h={32}>
            <rect x="1" y="1" width="28" height="27" rx="1" fill="#f1f1f1" stroke="#b4b4b4" />
            <path
              d="M13.500 4.500c-2 0-1 5 1 9s6 6 9 6 3-3 0-3c-5 0-12 1-16 4s-3 5-1 3 7-9 8-13 .5-6-1-6z"
              fill="none"
              stroke="#cf1f2a"
              strokeWidth="1.400"
            />
          </Icon>
        </TaskButton>
      </div>

      <div className="relative flex h-full items-center text-white">
        <Icon w={8} h={5}><path d="M0 5l4-4 4 4z" fill="#fff" /></Icon>
        <span className="mr-[3px] ml-[13px] flex items-center gap-[10px]">
          <Icon w={14} h={16}>
            <path d="M7 14H2V3h2V1h4v2" fill="none" stroke="#fff" strokeWidth="1.600" />
            <path d="M8 3v4M12 3v4M6 7h8v2c0 3-7 3-7 0zM10 10v4H6" fill="#fff" stroke="#fff" strokeWidth="1.300" />
          </Icon>
          <Icon w={15} h={13}>
            <path d="M1.500 13v-2M4.500 13v-4M7.500 13V7M10.500 13V4M13.500 13V1" stroke="#fff" strokeWidth="2" />
          </Icon>
          <Icon w={16} h={14}>
            <path d="M0 4h3l4-4v14l-4-4H0z" fill="#fff" />
            <path d="M9 4c2 2 2 4 0 6M11 2c3 3 3 7 0 10M13 1c4 4 3 9 0 12" fill="none" stroke="#fff" />
          </Icon>
        </span>
        <time className="w-[74px] text-center leading-[17px]" dateTime="2020-07-17T00:10">
          12:10 AM
          <br />
          7/17/2020
        </time>
        <button aria-label="Show desktop" className="mr-px h-[38px] w-[13px] border border-[#5d80a8] bg-linear-to-br from-[#6f92b8] via-[#1d4674] to-[#1b4b80]" />
      </div>
    </footer>
  );
}

export default function App() {
  return (
    <div className="flex h-screen flex-col overflow-hidden bg-[#333] font-['Roboto','Noto_Sans',sans-serif] text-[12px] text-black">
      <Defs />
      <TitleBar />
      <MenuBar />
      <TaskToolbar />
      <FileToolbar />
      <MessageBar />
      <div className="flex min-h-0 flex-1 border-t border-[#9a9a9a]">
        <SidePanel />
        <div className="flex min-w-0 flex-1 pr-[5px] pl-1">
          <BirthForm />
        </div>
        <ScrollBar />
      </div>
      <TaskBar />
    </div>
  );
}
